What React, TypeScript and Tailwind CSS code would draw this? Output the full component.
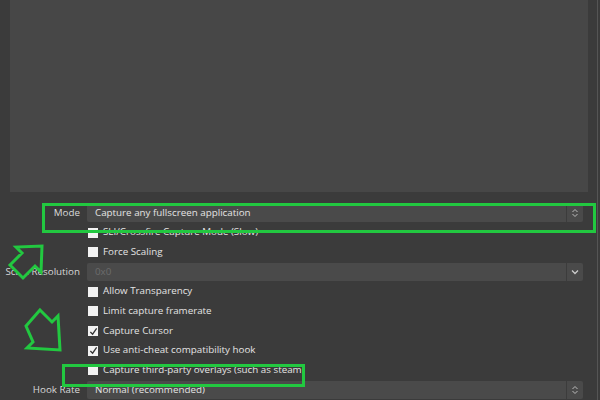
const F = { fontFamily: '"Open Sans", "Liberation Sans", sans-serif' };

function Box({ checked }: { checked?: boolean }) {
  return (
    <div className="w-[10px] h-[10px] bg-[#f2f2f2] flex items-center justify-center shrink-0">
      {checked && (
        <svg width="9" height="9" viewBox="0 0 10 10"><path d="M1.5 5.5 L4 8 L8.5 1.5" stroke="#333" strokeWidth="1.4" fill="none" /></svg>
      )}
    </div>
  );
}

function Check({ label, checked }: { label: string; checked?: boolean }) {
  return (
    <div className="h-[19.7px] flex items-center gap-[5px] pl-[88px]">
      <Box checked={checked} />
      <span className="text-[#e4e4e4]">{label}</span>
    </div>
  );
}

function Field({ label, value, dim, arrow }: { label: string; value: string; dim?: boolean; arrow: "updown" | "down" }) {
  return (
    <div className="h-[19.7px] flex items-center">
      <div className="w-[80px] text-right text-[#d8d8d8]">{label}</div>
      <div className="ml-[7px] w-[496px] h-[18px] bg-[#4a4a4a] flex items-center rounded-[2px]">
        <span className={`flex-1 pl-[8px] ${dim ? "text-[#6c6c6c]" : "text-[#e4e4e4]"}`}>{value}</span>
        <div className="w-[17px] h-full border-l border-[#3c3c3c] flex items-center justify-center">
          {arrow === "updown" ? (
            <svg width="8" height="10" viewBox="0 0 8 10"><path d="M1.5 4 L4 1.5 L6.5 4 M1.5 6 L4 8.5 L6.5 6" stroke="#bbb" fill="none" /></svg>
          ) : (
            <svg width="8" height="6" viewBox="0 0 8 6"><path d="M1 1.5 L4 4.5 L7 1.5" stroke="#ccc" strokeWidth="1.3" fill="none" /></svg>
          )}
        </div>
      </div>
    </div>
  );
}

export default function App() {
  return (
    <div className="relative w-[600px] h-[400px] bg-[#3b3b3b] overflow-hidden text-[9.8px]" style={F}>
      <div className="flex h-full">
        <div className="w-[597px] flex flex-col">
          <div className="ml-[10px] mr-[9px] h-[197px] bg-[#474747]" />
          <div className="pt-[11px] flex flex-col">
            <Field label="Mode" value="Capture any fullscreen application" arrow="updown" />
            <Check label="SLI/Crossfire Capture Mode (Slow)" />
            <Check label="Force Scaling" />
            <Field label="Scale Resolution" value="0x0" dim arrow="down" />
            <Check label="Allow Transparency" />
            <Check label="Limit capture framerate" />
            <Check label="Capture Cursor" checked />
            <Check label="Use anti-cheat compatibility hook" checked />
            <Check label="Capture third-party overlays (such as steam)" />
            <Field label="Hook Rate" value="Normal (recommended)" arrow="updown" />
          </div>
        </div>
        <div className="w-[1px] bg-[#555]" />
      </div>
      <div className="absolute left-[42px] top-[203px] w-[554px] h-[30px] border-[3px] border-[#22c840]" />
      <div className="absolute left-[62px] top-[364px] w-[243px] h-[23px] border-[3px] border-[#22c840]" />
      <svg className="absolute left-0 top-0" width="600" height="400">
        <path d="M10 265 L22 253 L16 247 L42 246 L41 272 L35 266 L23 278 Z" fill="#3b3b3b" stroke="#22c840" strokeWidth="3" />
        <path d="M40 310 L52 322 L58 316 L60 350 L27 348 L33 342 L26 326 Z" fill="#3b3b3b" stroke="#22c840" strokeWidth="3" />
      </svg>
    </div>
  );
}
